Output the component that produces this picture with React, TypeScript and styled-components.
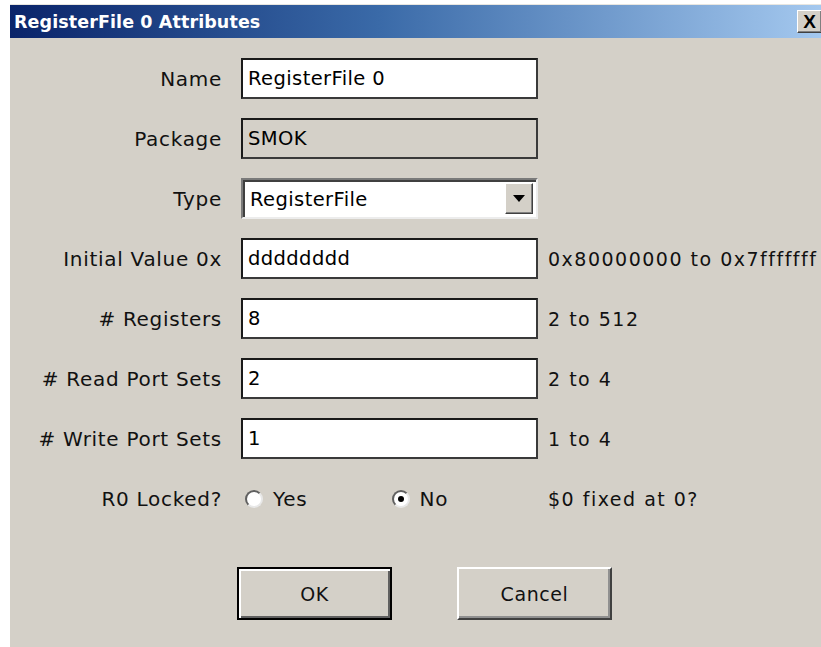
import styled, { createGlobalStyle } from "styled-components";

const GlobalStyle = createGlobalStyle`
  body {
    margin: 0;
    background: #ffffff;
    overflow: hidden;
    font-family: "DejaVu Sans", "Liberation Sans", sans-serif;
  }
`;

const Window = styled.div`
  margin: 4px 0 0 10px;
  width: 820px;
  height: 643px;
  background: #d4d0c8;
  border-top: 1px solid #e8e6e0;
  box-sizing: border-box;
`;

const TitleBar = styled.div`
  height: 33px;
  display: flex;
  align-items: center;
  justify-content: space-between;
  padding: 0 8px 0 4px;
  background: linear-gradient(to right, #0a246a 0%, #3a6aa8 45%, #a6caf0 100%);
`;

const Title = styled.span`
  color: #ffffff;
  font-weight: bold;
  font-size: 17.5px;
  letter-spacing: 0.1px;
`;

const CloseButton = styled.button`
  width: 25px;
  height: 23px;
  padding: 0;
  display: flex;
  align-items: center;
  justify-content: center;
  background: #d4d0c8;
  border: 1px solid;
  border-color: #ffffff #404040 #404040 #ffffff;
  box-shadow: inset -1px -1px 0 #808080;
  font-family: "Liberation Sans", sans-serif;
  font-weight: bold;
  font-size: 19px;
  line-height: 1;
  color: #000;
`;

const Form = styled.div`
  display: grid;
  grid-template-columns: 221px 297px 1fr;
  grid-auto-rows: 41px;
  column-gap: 10px;
  row-gap: 19px;
  padding-top: 20px;
  align-items: center;
`;

const Label = styled.label`
  padding-right: 9px;
  text-align: right;
  font-size: 20px;
  letter-spacing: 0.7px;
  color: #111;
  white-space: nowrap;
`;

const TextBox = styled.div<{ $readOnly?: boolean }>`
  height: 41px;
  box-sizing: border-box;
  display: flex;
  align-items: center;
  padding-left: 5px;
  background: ${(p) => (p.$readOnly ? "#d4d0c8" : "#ffffff")};
  border: 2px solid;
  border-color: #1a1a1a #3a3a3a #3a3a3a #1a1a1a;
  font-size: 19.5px;
  letter-spacing: 0.4px;
  color: #000;
  white-space: nowrap;
`;

const Combo = styled.div`
  height: 41px;
  box-sizing: border-box;
  display: flex;
  align-items: stretch;
  background: #ffffff;
  border: 2px solid;
  border-color: #7a7a7a #ececec #ececec #7a7a7a;
  box-shadow: inset 2px 2px 0 #404040;
`;

const ComboText = styled.span`
  flex: 1;
  display: flex;
  align-items: center;
  padding-left: 7px;
  padding-top: 2px;
  font-size: 19.5px;
  letter-spacing: 0.4px;
  color: #000;
`;

const ComboButton = styled.span`
  width: 26px;
  margin: 3px 3px 3px 0;
  display: flex;
  align-items: center;
  justify-content: center;
  background: #d4d0c8;
  border: 1px solid;
  border-color: #ffffff #404040 #404040 #ffffff;
  box-shadow: inset -1px -1px 0 #808080;
`;

const Hint = styled.span`
  font-size: 19px;
  letter-spacing: 1.5px;
  color: #111;
  white-space: nowrap;
`;

const RadioGroup = styled.div`
  display: flex;
  align-items: center;
  padding-left: 4px;
`;

const RadioOption = styled.label`
  width: 148px;
  display: flex;
  align-items: center;
  gap: 10px;
  font-size: 20px;
  letter-spacing: 0.7px;
  color: #111;
`;

const RadioDot = styled.span<{ $checked?: boolean }>`
  width: 18px;
  height: 18px;
  box-sizing: border-box;
  border-radius: 50%;
  background: #ffffff;
  border: 2px solid;
  border-color: #606060 #e8e8e8 #e8e8e8 #606060;
  display: flex;
  align-items: center;
  justify-content: center;

  &::after {
    content: "";
    width: 6px;
    height: 6px;
    border-radius: 50%;
    background: ${(p) => (p.$checked ? "#000" : "transparent")};
  }
`;

const ButtonRow = styled.div`
  display: flex;
  gap: 65px;
  padding: 48px 0 0 227px;
`;

const DialogButton = styled.button<{ $default?: boolean }>`
  width: 155px;
  height: 53px;
  box-sizing: border-box;
  background: #d4d0c8;
  font-family: "DejaVu Sans", sans-serif;
  font-size: 19px;
  letter-spacing: 0.6px;
  color: #111;
  border: 2px solid;
  border-color: ${(p) => (p.$default ? "#000" : "#ffffff #404040 #404040 #ffffff")};
  box-shadow: ${(p) =>
    p.$default
      ? "inset 2px 2px 0 #ffffff, inset -2px -2px 0 #606060"
      : "inset -2px -2px 0 #909090"};
`;

const fields = [
  { label: "Name", value: "RegisterFile 0", hint: "" },
  { label: "Package", value: "SMOK", hint: "", readOnly: true },
];

const numeric = [
  { label: "Initial Value 0x", value: "dddddddd", hint: "0x80000000 to 0x7fffffff" },
  { label: "# Registers", value: "8", hint: "2 to 512" },
  { label: "# Read Port Sets", value: "2", hint: "2 to 4" },
  { label: "# Write Port Sets", value: "1", hint: "1 to 4" },
];

export default function App() {
  return (
    <>
      <GlobalStyle />
      <Window>
        <TitleBar>
          <Title>RegisterFile 0 Attributes</Title>
          <CloseButton>X</CloseButton>
        </TitleBar>
        <Form>
          {fields.map((f) => (
            <>
              <Label key={f.label}>{f.label}</Label>
              <TextBox $readOnly={f.readOnly}>{f.value}</TextBox>
              <Hint>{f.hint}</Hint>
            </>
          ))}
          <Label>Type</Label>
          <Combo>
            <ComboText>RegisterFile</ComboText>
            <ComboButton>
              <svg width="12" height="7" viewBox="0 0 12 7">
                <path d="M0 0h12L6 7z" fill="#000" />
              </svg>
            </ComboButton>
          </Combo>
          <Hint />
          {numeric.map((f) => (
            <>
              <Label key={f.label}>{f.label}</Label>
              <TextBox>{f.value}</TextBox>
              <Hint>{f.hint}</Hint>
            </>
          ))}
          <Label>R0 Locked?</Label>
          <RadioGroup>
            <RadioOption>
              <RadioDot />
              Yes
            </RadioOption>
            <RadioOption>
              <RadioDot $checked />
              No
            </RadioOption>
          </RadioGroup>
          <Hint>$0 fixed at 0?</Hint>
        </Form>
        <ButtonRow>
          <DialogButton $default>OK</DialogButton>
          <DialogButton>Cancel</DialogButton>
        </ButtonRow>
      </Window>
    </>
  );
}
